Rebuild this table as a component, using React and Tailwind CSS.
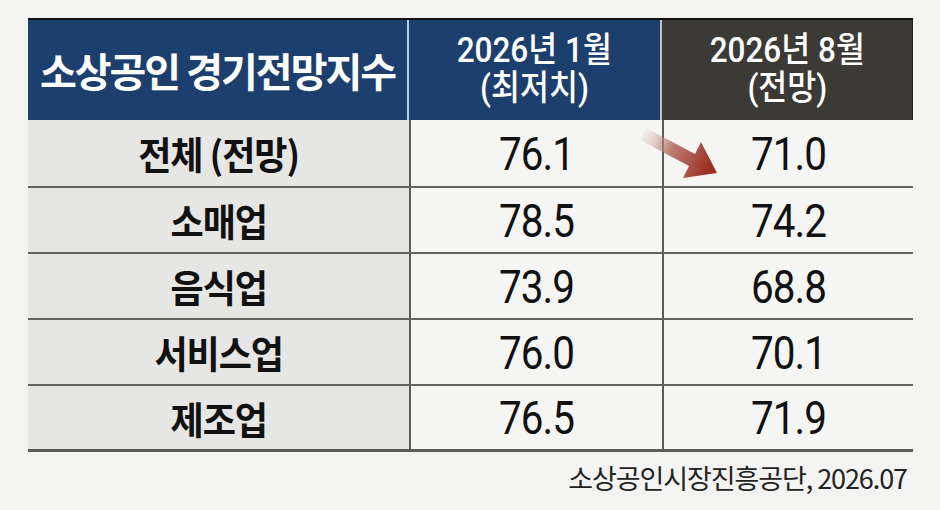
import React from "react";

const rows = [
  { label: "전체 (전망)", jan: "76.1", aug: "71.0", line: "h-[68px] border-b-2 border-[#626260]" },
  { label: "소매업", jan: "78.5", aug: "74.2", line: "h-[66px] border-b-2 border-[#626260]" },
  { label: "음식업", jan: "73.9", aug: "68.8", line: "h-[66px] border-b-2 border-[#626260]" },
  { label: "서비스업", jan: "76.0", aug: "70.1", line: "h-[66px] border-b-2 border-[#626260]" },
  { label: "제조업", jan: "76.5", aug: "71.9", line: "h-[66px] border-b-[3px] border-[#5b5b58]" },
];

// downward trend arrow between the two value columns
function TrendArrow() {
  return (
    <svg
      className="absolute left-[608px] top-[106px]"
      width="88"
      height="62"
      viewBox="0 0 88 62"
    >
      <defs>
        <linearGradient id="arrowGrad" gradientUnits="userSpaceOnUse" x1="6" y1="10" x2="72" y2="44">
          <stop offset="0" stopColor="#d8c4c0" stopOpacity="0.15" />
          <stop offset="0.45" stopColor="#b0675b" stopOpacity="0.85" />
          <stop offset="1" stopColor="#9b3025" />
        </linearGradient>
      </defs>
      <polygon
        points="10,4 59,30 65,18 81,49 47,54 53,42 4,16"
        fill="url(#arrowGrad)"
      />
    </svg>
  );
}

function ValueCell({ value }) {
  return (
    <div className="bg-[#f5f5f3] border-l-2 border-[#5a5a58] flex items-center justify-center text-[#111] font-[Roboto,Noto_Sans_CJK_KR,sans-serif]">
      <span className="inline-block text-[47px] leading-none font-normal scale-x-[0.86] tracking-tight">
        {value}
      </span>
    </div>
  );
}

export default function App() {
  return (
    <div className="w-[940px] h-[510px] bg-[#f3f3f1] pt-[18px] pl-[28px]">
      <div className="relative w-[885px]">
        {/* Header */}
        <div className="grid grid-cols-[381px_253px_251px] h-[102px] border-t-2 border-[#111]">
          <div className="bg-[#1d3f6d] flex items-center justify-center text-white font-bold text-[40px] leading-none tracking-[-0.05em] border-r-2 border-[#b9d0ea] font-[Noto_Sans_CJK_KR,sans-serif]">
            소상공인 경기전망지수
          </div>
          <div className="bg-[#1d3f6d] flex flex-col items-center justify-center text-white border-r-2 border-[#c2c2c0] font-[Roboto,Noto_Sans_CJK_KR,sans-serif]">
            <span className="inline-block text-[35px] leading-[38px] font-medium scale-x-[0.9]">2026년 1월</span>
            <span className="inline-block text-[35px] leading-[38px] font-medium scale-x-[0.9]">(최저치)</span>
          </div>
          <div className="bg-[#3b3a36] flex flex-col items-center justify-center text-white border-r border-[#222] font-[Roboto,Noto_Sans_CJK_KR,sans-serif]">
            <span className="inline-block text-[35px] leading-[38px] font-medium scale-x-[0.9]">2026년 8월</span>
            <span className="inline-block text-[35px] leading-[38px] font-medium scale-x-[0.9]">(전망)</span>
          </div>
        </div>

        {/* Body rows */}
        {rows.map((row) => (
          <div key={row.label} className={"grid grid-cols-[381px_253px_251px] " + row.line}>
            <div className="bg-[#e6e6e4] flex items-center justify-center text-[#111] font-[Noto_Sans_CJK_KR,sans-serif]">
              <span className="inline-block text-[38px] leading-none font-bold tracking-[-0.03em] scale-x-[0.95]">
                {row.label}
              </span>
            </div>
            <ValueCell value={row.jan} />
            <ValueCell value={row.aug} />
          </div>
        ))}

        <TrendArrow />

        {/* Source */}
        <div className="mt-[11px] pr-[6px] text-right text-[#222] font-[Noto_Sans_CJK_KR,sans-serif]">
          <span className="inline-block text-[27px] leading-[30px] tracking-[-0.04em]">
            소상공인시장진흥공단, 2026.07
          </span>
        </div>
      </div>
    </div>
  );
}
